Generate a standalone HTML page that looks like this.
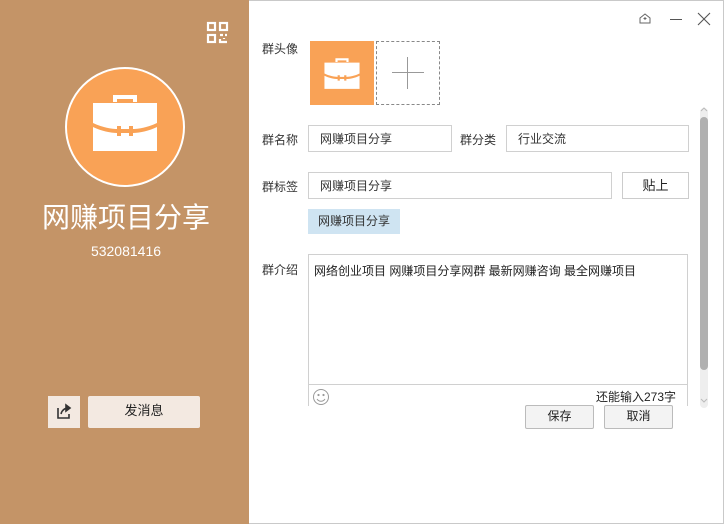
<!DOCTYPE html>
<html><head><meta charset="utf-8"><style>
*{margin:0;padding:0;box-sizing:border-box}
body{width:724px;height:524px;position:relative;overflow:hidden;background:#fff;font-family:"Liberation Sans","Noto Sans CJK SC","Microsoft YaHei",sans-serif;font-size:12px;color:#333}
.a{position:absolute}
#left{left:0;top:0;width:249px;height:524px;background:#c49467}
.lbl{font-size:12px;color:#333}
.inp{border:1px solid #d0d0d0;background:#fff;padding-left:11px;line-height:26px;font-size:12px;color:#333}
.btn{border:1px solid #bbb;background:#f3f3f3;text-align:center;line-height:21px;font-size:12px;color:#222;border-radius:2px}
</style></head><body>
<div id="left" class="a">
 <svg class="a" style="left:206px;top:21px" width="23" height="23" viewBox="0 0 23 23" fill="none" stroke="#fff" stroke-width="2.2">
  <rect x="2" y="2" width="7" height="7"/><rect x="14" y="2" width="7" height="7"/><rect x="2" y="14" width="7" height="7"/>
  <path d="M14 14h3M19 14h2M14 18v3h7M18 17v1" />
 </svg>
 <div class="a" style="left:65px;top:67px;width:120px;height:120px;border-radius:50%;background:#f9a256;border:2px solid #fff"></div>
 <svg class="a" style="left:91px;top:91px" width="68" height="62" viewBox="0 0 68 62">
  <path d="M22 4h24v7h-4V8H26v3h-4z" fill="#fff"/>
  <path d="M2 12h64v20c-8 4-18 6-24 6v-3h-4v3H30v-3h-4v3C20 38 10 36 2 32z" fill="#fff"/>
  <path d="M2 36c8 4 18 6 24 6v3h4v-3h8v3h4v-3c6 0 16-2 24-6v24H2z" fill="#fff"/>
 </svg>
 <div class="a" style="left:0;width:252px;top:196px;text-align:center;font-size:28px;color:#fff">网赚项目分享</div>
 <div class="a" style="left:0;width:252px;top:243px;text-align:center;font-size:14px;color:#fff">532081416</div>
 <div class="a" style="left:48px;top:396px;width:32px;height:32px;background:#f3e9e1"></div>
 <svg class="a" style="left:55px;top:403px" width="18" height="18" viewBox="0 0 18 18" fill="none" stroke="#333" stroke-width="1.6"><path d="M3 5v10h11v-4"/><path d="M6 11c1-4 4-6 8-6" /><path d="M11 2l4 3-4 3z" fill="#333"/></svg>
 <div class="a" style="left:88px;top:396px;width:112px;height:32px;background:#f3e9e1;border-radius:2px;text-align:center;line-height:30px;font-size:13px;color:#222">发消息</div>
</div>
<div class="a" style="left:249px;top:0;width:475px;height:524px;border:1px solid #c9c9c9;border-left:none"></div>
<svg class="a" style="left:638px;top:12px" width="14" height="14" viewBox="0 0 14 14" fill="none" stroke="#666" stroke-width="1"><path d="M2 6l5-4 5 4v5H2z"/><path d="M7 5v3M5.5 6.5h3"/></svg>
<div class="a" style="left:670px;top:19px;width:12px;height:1px;background:#555"></div>
<svg class="a" style="left:697px;top:12px" width="14" height="14" viewBox="0 0 14 14" stroke="#555" stroke-width="1.1"><path d="M1 1l12 12M13 1L1 13"/></svg>

<div class="a lbl" style="left:262px;top:40px">群头像</div>
<div class="a" style="left:310px;top:41px;width:64px;height:64px;background:#f9a256"></div>
<svg class="a" style="left:323px;top:56px" width="38" height="34" viewBox="0 0 68 62">
  <path d="M22 4h24v7h-4V8H26v3h-4z" fill="#fff"/>
  <path d="M2 12h64v20c-8 4-18 6-24 6v-3h-4v3H30v-3h-4v3C20 38 10 36 2 32z" fill="#fff"/>
  <path d="M2 36c8 4 18 6 24 6v3h4v-3h8v3h4v-3c6 0 16-2 24-6v24H2z" fill="#fff"/>
</svg>
<div class="a" style="left:376px;top:41px;width:64px;height:64px;border:1px dashed #888"></div>
<div class="a" style="left:392px;top:72px;width:32px;height:1px;background:#999"></div>
<div class="a" style="left:407px;top:57px;width:1px;height:32px;background:#999"></div>

<div class="a lbl" style="left:262px;top:131px">群名称</div>
<div class="a inp" style="left:308px;top:125px;width:144px;height:27px">网赚项目分享</div>
<div class="a lbl" style="left:460px;top:131px">群分类</div>
<div class="a inp" style="left:506px;top:125px;width:183px;height:27px">行业交流</div>

<div class="a lbl" style="left:262px;top:178px">群标签</div>
<div class="a inp" style="left:308px;top:172px;width:304px;height:27px">网赚项目分享</div>
<div class="a" style="left:622px;top:172px;width:67px;height:27px;border:1px solid #ccc;background:#fff;text-align:center;line-height:25px;font-size:13px;color:#222">贴上</div>
<div class="a" style="left:308px;top:209px;width:92px;height:25px;background:#cfe4f2;text-align:center;line-height:25px;font-size:12px;color:#333">网赚项目分享</div>

<div class="a lbl" style="left:262px;top:261px">群介绍</div>
<div class="a" style="left:308px;top:254px;width:380px;height:152px;border:1px solid #d0d0d0;border-bottom:none"></div>
<div class="a" style="left:309px;top:384px;width:378px;height:1px;background:#d0d0d0"></div>
<div class="a" style="left:314px;top:262px;font-size:12px;color:#222">网络创业项目 网赚项目分享网群 最新网赚咨询 最全网赚项目</div>
<svg class="a" style="left:312px;top:388px" width="18" height="18" viewBox="0 0 18 18" fill="none" stroke="#999"><circle cx="9" cy="9" r="7.5"/><path d="M5 11c2 3 6 3 8 0"/><circle cx="6.5" cy="7" r=".6" fill="#999"/><circle cx="11.5" cy="7" r=".6" fill="#999"/></svg>
<div class="a" style="left:596px;top:388px;font-size:12px;color:#222">还能输入273字</div>

<div class="a" style="left:700px;top:108px;width:8px;height:300px;background:#eee;border-radius:4px"></div>
<div class="a" style="left:700px;top:117px;width:8px;height:253px;background:#b0b0b0;border-radius:4px"></div>
<svg class="a" style="left:700px;top:107px" width="8" height="5"><path d="M1 4l3-3 3 3" fill="none" stroke="#bbb"/></svg>
<svg class="a" style="left:700px;top:398px" width="8" height="5"><path d="M1 1l3 3 3-3" fill="none" stroke="#bbb"/></svg>

<div class="a btn" style="left:525px;top:405px;width:69px;height:24px">保存</div>
<div class="a btn" style="left:604px;top:405px;width:69px;height:24px">取消</div>
</body></html>
